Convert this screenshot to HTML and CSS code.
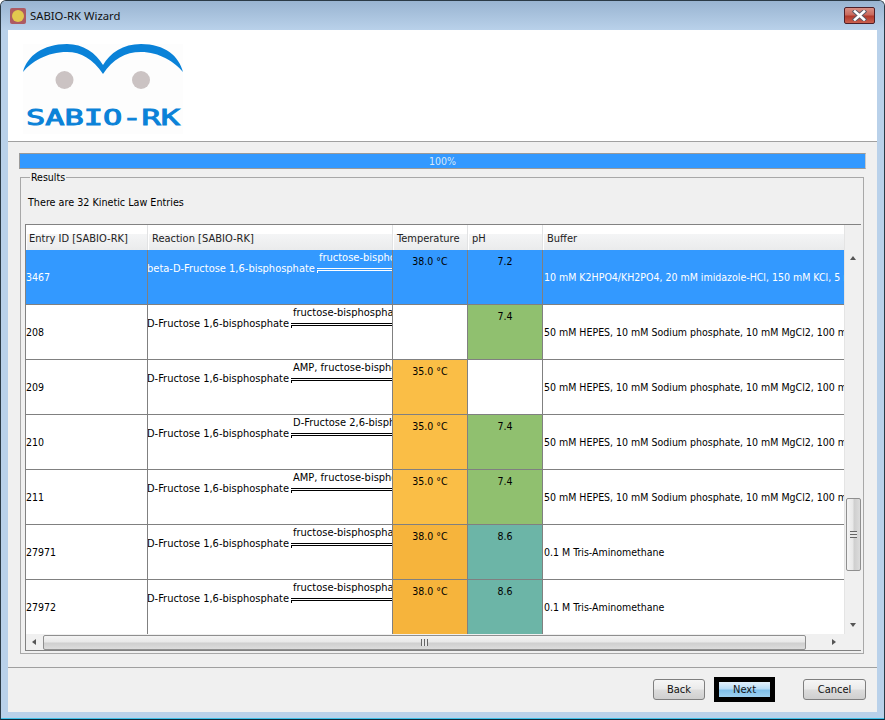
FILE: index.html
```html
<!DOCTYPE html>
<html lang="en">
<head>
    <meta charset="UTF-8">
    <title>SABIO-RK Wizard</title>
    <link rel="stylesheet" href="styles.css">
</head>
<body>
    <div class="window">
        <div class="titlebar">
            <span class="app-icon"><span class="app-icon-dot"></span></span>
            <span class="title">SABIO-RK Wizard</span>
            <span class="close-btn">
                <svg width="17" height="11" viewBox="0 0 17 11">
                    <path d="M4 1.5 L13 9.5 M13 1.5 L4 9.5" stroke="#5a5a66" stroke-width="4.4" stroke-linecap="square"/>
                    <path d="M4 1.5 L13 9.5 M13 1.5 L4 9.5" stroke="#fff" stroke-width="2.6" stroke-linecap="square"/>
                </svg>
            </span>
        </div>

        <div class="client">
            <div class="banner">
                <svg class="logo" width="160" height="90" viewBox="0 0 160 90">
                    <rect width="160" height="90" fill="#fdfdfd"/>
                    <path d="M0 28 C4 12 20 0 44 0 C60 0 73 9 80 21 C87 9 100 0 118 0 C142 0 156 12 160 28 C152 18 136 8 118 8 C102 8 90 15 80 30 C70 15 58 8 44 8 C24 8 8 18 0 28 Z" fill="#0a82d8"/>
                    <circle cx="41.5" cy="36" r="9" fill="#cbc3c3"/>
                    <circle cx="118" cy="36" r="9" fill="#cbc3c3"/>
                    <text x="3" y="81" class="logo-text" textLength="154" lengthAdjust="spacingAndGlyphs">SABIO-RK</text>
                </svg>
            </div>

            <div class="progress">100%</div>

            <fieldset class="results">
                <legend>Results</legend>
                <p class="count">There are 32 Kinetic Law Entries</p>

                <div class="table-box">
                    <div class="table-view">
                        <div class="row head">
                            <div class="cell">Entry ID [SABIO-RK]</div>
                            <div class="cell">Reaction [SABIO-RK]</div>
                            <div class="cell">Temperature</div>
                            <div class="cell">pH</div>
                            <div class="cell">Buffer</div>
                        </div>

                        <div class="row selected">
                            <div class="cell id">3467</div>
                            <div class="cell reaction">
                                <span class="substrate">beta-D-Fructose 1,6-bisphosphate</span>
                                <span class="equation"><span class="enzyme">fructose-bisphosphatase</span><span class="arrow"></span></span>
                            </div>
                            <div class="cell value">38.0 °C</div>
                            <div class="cell value">7.2</div>
                            <div class="cell buffer">10 mM K2HPO4/KH2PO4, 20 mM imidazole-HCl, 150 mM KCl, 5 mM MgCl2</div>
                        </div>

                        <div class="row">
                            <div class="cell id">208</div>
                            <div class="cell reaction">
                                <span class="substrate">D-Fructose 1,6-bisphosphate</span>
                                <span class="equation"><span class="enzyme">fructose-bisphosphatase</span><span class="arrow"></span></span>
                            </div>
                            <div class="cell value"></div>
                            <div class="cell value ph-74">7.4</div>
                            <div class="cell buffer">50 mM HEPES, 10 mM Sodium phosphate, 10 mM MgCl2, 100 mM KCl</div>
                        </div>

                        <div class="row">
                            <div class="cell id">209</div>
                            <div class="cell reaction">
                                <span class="substrate">D-Fructose 1,6-bisphosphate</span>
                                <span class="equation"><span class="enzyme">AMP, fructose-bisphosphatase</span><span class="arrow"></span></span>
                            </div>
                            <div class="cell value temp-35">35.0 °C</div>
                            <div class="cell value"></div>
                            <div class="cell buffer">50 mM HEPES, 10 mM Sodium phosphate, 10 mM MgCl2, 100 mM KCl</div>
                        </div>

                        <div class="row">
                            <div class="cell id">210</div>
                            <div class="cell reaction">
                                <span class="substrate">D-Fructose 1,6-bisphosphate</span>
                                <span class="equation"><span class="enzyme">D-Fructose 2,6-bisphosphate</span><span class="arrow"></span></span>
                            </div>
                            <div class="cell value temp-35">35.0 °C</div>
                            <div class="cell value ph-74">7.4</div>
                            <div class="cell buffer">50 mM HEPES, 10 mM Sodium phosphate, 10 mM MgCl2, 100 mM KCl</div>
                        </div>

                        <div class="row">
                            <div class="cell id">211</div>
                            <div class="cell reaction">
                                <span class="substrate">D-Fructose 1,6-bisphosphate</span>
                                <span class="equation"><span class="enzyme">AMP, fructose-bisphosphatase</span><span class="arrow"></span></span>
                            </div>
                            <div class="cell value temp-35">35.0 °C</div>
                            <div class="cell value ph-74">7.4</div>
                            <div class="cell buffer">50 mM HEPES, 10 mM Sodium phosphate, 10 mM MgCl2, 100 mM KCl</div>
                        </div>

                        <div class="row">
                            <div class="cell id">27971</div>
                            <div class="cell reaction">
                                <span class="substrate">D-Fructose 1,6-bisphosphate</span>
                                <span class="equation"><span class="enzyme">fructose-bisphosphatase</span><span class="arrow"></span></span>
                            </div>
                            <div class="cell value temp-38">38.0 °C</div>
                            <div class="cell value ph-86">8.6</div>
                            <div class="cell buffer">0.1 M Tris-Aminomethane</div>
                        </div>

                        <div class="row">
                            <div class="cell id">27972</div>
                            <div class="cell reaction">
                                <span class="substrate">D-Fructose 1,6-bisphosphate</span>
                                <span class="equation"><span class="enzyme">fructose-bisphosphatase</span><span class="arrow"></span></span>
                            </div>
                            <div class="cell value temp-38">38.0 °C</div>
                            <div class="cell value ph-86">8.6</div>
                            <div class="cell buffer">0.1 M Tris-Aminomethane</div>
                        </div>
                    </div>

                    <div class="vscroll">
                        <span class="arrow-up"></span>
                        <div class="vtrack"><div class="vthumb"><span class="vgrip"></span></div></div>
                        <span class="arrow-down"></span>
                    </div>

                    <div class="hscroll">
                        <span class="arrow-left"></span>
                        <div class="hthumb"><span class="hgrip"></span></div>
                        <span class="arrow-right"></span>
                    </div>
                    <div class="corner"></div>
                </div>
            </fieldset>

            <div class="footer">
                <button class="btn btn-back">Back</button>
                <span class="default-frame"><button class="btn btn-next">Next</button></span>
                <button class="btn btn-cancel">Cancel</button>
            </div>
        </div>
    </div>
</body>
</html>
```

FILE: styles.css
```css
* {
    margin: 0;
    padding: 0;
    box-sizing: border-box;
}

body {
    width: 885px;
    height: 720px;
    background-color: #fff;
    font-family: "DejaVu Sans", sans-serif;
    font-stretch: condensed;
    font-size: 10.5px;
    color: #000;
    overflow: hidden;
}

/* Window frame */
.window {
    width: 885px;
    height: 720px;
    display: flex;
    flex-direction: column;
    padding: 0 7px 7px;
    background: #b9d1ea;
    border: 1px solid #2b3a46;
    border-bottom-color: #0f2a3c;
    border-radius: 6px 6px 0 0;
    box-shadow: inset 0 -1px 0 #3fc0e8;
}

.titlebar {
    height: 29px;
    flex: none;
    display: flex;
    align-items: center;
    margin: 0 -7px;
    padding: 0 9px 0 9px;
    background: linear-gradient(#99b4d1, #b9d1ea);
    border-radius: 5px 5px 0 0;
}

.app-icon {
    width: 16px;
    height: 16px;
    display: flex;
    align-items: center;
    justify-content: center;
    background-color: #ad5a62;
    border-radius: 2px;
    margin-right: 4px;
}

.app-icon-dot {
    width: 12px;
    height: 12px;
    background-color: #e2c84e;
    border-radius: 50%;
}

.title {
    font-family: "Noto Sans", sans-serif;
    font-stretch: normal;
    font-size: 11.3px;
    color: #111;
}

.close-btn {
    width: 31px;
    height: 17px;
    margin-left: auto;
    display: flex;
    align-items: center;
    justify-content: center;
    background: linear-gradient(#d98f84 0%, #c96a5e 45%, #b23a2c 55%, #c9604f 100%);
    border: 1px solid #4d1f28;
    border-radius: 2px;
}

.client {
    flex: 1;
    display: flex;
    flex-direction: column;
    background-color: #f0f0f0;
}

.banner {
    height: 112px;
    flex: none;
    padding: 14px 15px 0;
    background-color: #fff;
    border-bottom: 1px solid #a0a0a0;
}

.logo {
    display: block;
}

.logo-text {
    font-family: "DejaVu Sans Mono", monospace;
    font-stretch: normal;
    font-size: 21px;
    fill: #0a82d8;
    stroke: #0a82d8;
    stroke-width: 0.9px;
}

/* Progress bar */
.progress {
    height: 16px;
    flex: none;
    margin: 11px 11px 0;
    background-color: #3399ff;
    border: 1px solid #9a9a9a;
    border-right-color: #c8c8c8;
    color: #d8e8f8;
    line-height: 15px;
    text-align: center;
}

/* Results group */
.results {
    flex: none;
    height: 483px;
    margin: 2px 13px 0 12px;
    padding: 0 3px 3px 4px;
    border: 1px solid #a8a8a8;
    min-width: 0;
}

.results legend {
    margin-left: 5px;
    padding: 0 1px;
    line-height: 13px;
}

.count {
    height: 20px;
    padding: 12px 0 0 3px;
    font-size: 10.7px;
    line-height: 13px;
    margin-bottom: 20px;
}

.table-box {
    width: 836px;
    height: 427px;
    display: grid;
    grid-template-columns: 818px 17px;
    grid-template-rows: 409px 16px;
    border: 1px solid #828282;
    background-color: #eee;
}

.table-view {
    overflow: hidden;
    background-color: #fff;
}

.row {
    height: 55px;
    width: 1000px;
    display: grid;
    grid-template-columns: 122px 245px 75px 75px 483px;
    border-bottom: 1px solid #808080;
    background-color: #fff;
}

.cell {
    border-right: 1px solid #808080;
    overflow: hidden;
    white-space: nowrap;
}

.head {
    height: 25px;
    background: linear-gradient(#fff 0, #fff 9px, #f4f5f6 9px, #eaebec 100%);
    border-bottom: none;
}

.head .cell {
    padding: 7px 0 0 4px;
    font-size: 11px;
    line-height: 13px;
    color: #222;
    border-right: 1px solid #e2e3e4;
    box-shadow: inset 1px 0 0 #fff;
}

.head .cell:first-child {
    padding-left: 3px;
}

.id {
    line-height: 54px;
}

.buffer {
    padding-left: 1px;
    line-height: 54px;
    border-right: none;
}

.value {
    padding-top: 5px;
    line-height: 13px;
    text-align: center;
}

.reaction {
    display: flex;
    align-items: flex-start;
    font-size: 11px;
}

.substrate {
    flex: none;
    margin: 12px 0 0 -1px;
    line-height: 13px;
}

.equation {
    flex: none;
    margin-left: 2px;
    display: flex;
    flex-direction: column;
}

.enzyme {
    padding: 0 0 0 2px;
    line-height: 13px;
    margin-top: 1px;
}

.arrow {
    display: block;
    height: 3px;
    margin-top: 4px;
    width: 170px;
    border-top: 1px solid #000;
    border-bottom: 1px solid #000;
    position: relative;
}

.arrow::after {
    content: "";
    position: absolute;
    left: 0;
    top: 2px;
    width: 3px;
    height: 2px;
    border-left: 1px solid #000;
}

/* Selected row */
.selected {
    background-color: #3399ff;
}

.selected .id,
.selected .reaction,
.selected .buffer {
    color: #fff;
}

.selected .arrow,
.selected .arrow::after {
    border-color: #fff;
}

/* Cell colours */
.temp-35 {
    background-color: #fabe46;
}

.temp-38 {
    background-color: #f6b43c;
}

.ph-74 {
    background-color: #90c06f;
}

.ph-86 {
    background-color: #6cb5a7;
}

/* Scrollbars */
.vscroll {
    display: flex;
    flex-direction: column;
    padding-top: 25px;
    background-color: #f0f0f0;
    border-left: 1px solid #e4e4e4;
}

.arrow-up,
.arrow-down,
.arrow-left,
.arrow-right {
    flex: none;
    width: 0;
    height: 0;
    border-style: solid;
    border-color: transparent;
}

.arrow-up {
    margin: 6px 0 0 5px;
    border-width: 0 3.5px 4px;
    border-bottom-color: #555;
}

.arrow-down {
    margin: 0 0 7px 5px;
    border-width: 4px 3.5px 0;
    border-top-color: #555;
}

.arrow-left {
    margin-left: 6px;
    border-width: 3.5px 4px 3.5px 0;
    border-right-color: #555;
}

.arrow-right {
    margin-left: 26px;
    border-width: 3.5px 0 3.5px 4px;
    border-left-color: #555;
}

.vtrack {
    flex: 1;
    padding: 238px 1px 0 1px;
}

.vthumb {
    height: 73px;
    width: 15px;
    display: flex;
    align-items: center;
    justify-content: center;
    background: linear-gradient(90deg, #f4f4f4, #e8e8e8 45%, #cfcfcf 55%, #dcdcdc);
    border: 1px solid #8f8f8f;
    border-radius: 2px;
}

.vgrip {
    width: 7px;
    height: 7px;
    background: repeating-linear-gradient(#666 0, #666 1px, #e8e8e8 1px, #e8e8e8 3px);
}

.hscroll {
    display: flex;
    align-items: center;
    background-color: #f0f0f0;
}

.hthumb {
    width: 763px;
    height: 15px;
    margin-left: 7px;
    display: flex;
    align-items: center;
    justify-content: center;
    background: linear-gradient(#f4f4f4, #e8e8e8 45%, #cfcfcf 55%, #dcdcdc);
    border: 1px solid #8f8f8f;
    border-radius: 2px;
}

.hgrip {
    width: 7px;
    height: 7px;
    background: repeating-linear-gradient(90deg, #666 0, #666 1px, #e8e8e8 1px, #e8e8e8 3px);
}

.corner {
    background-color: #f0f0f0;
}

/* Footer buttons */
.footer {
    flex: 1;
    display: flex;
    align-items: center;
    justify-content: flex-end;
    margin-top: 13px;
    padding: 0 11px 1px 0;
    border-top: 1px solid #a0a0a0;
}

.btn {
    height: 21px;
    font-family: inherit;
    font-stretch: inherit;
    font-size: 11px;
    color: #111;
    background: linear-gradient(#f6f6f6, #ebebeb 45%, #dcdcdc 55%, #cfcfcf);
    border: 1px solid #7f7f7f;
    border-radius: 3px;
}

.btn-back {
    width: 52px;
}

.default-frame {
    display: flex;
    margin: 0 28px 0 9px;
    padding: 5px;
    background-color: #000;
}

.btn-next {
    width: 51px;
    height: 15px;
    line-height: 13px;
    border: none;
    border-radius: 0;
    background: linear-gradient(#e4f1fb, #b8dcf6 45%, #7fc0ea 55%, #9ed0f0);
}

.btn-cancel {
    width: 63px;
}
```
